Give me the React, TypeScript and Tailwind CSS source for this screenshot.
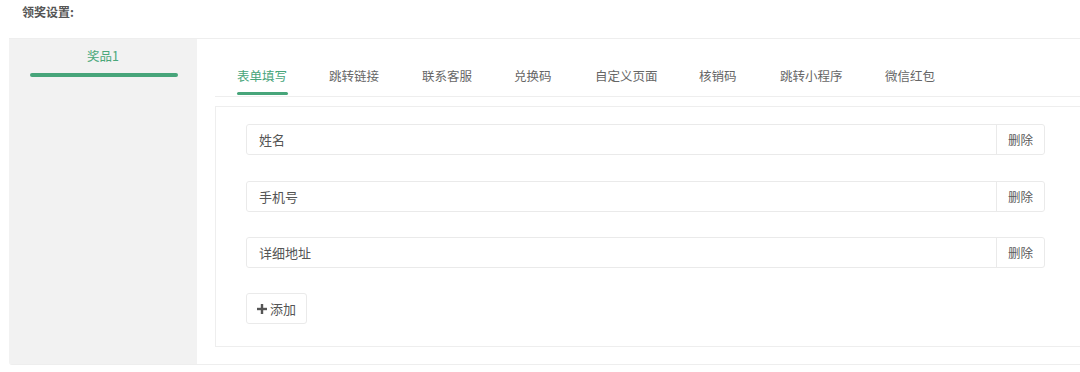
import React from "react";

const tabs = ["表单填写", "跳转链接", "联系客服", "兑换码", "自定义页面", "核销码", "跳转小程序", "微信红包"];
const tabX = [237, 329, 422, 514, 595, 699, 780, 885];
const fields = ["姓名", "手机号", "详细地址"];

export default function App() {
  return (
    <div
      className="w-[1080px] h-[372px] overflow-hidden bg-white text-[#666]"
      style={{ fontFamily: '"Noto Sans CJK SC", "Noto Sans", sans-serif' }}
    >
      <div className="pl-[22px] pt-[4px] h-[38px] text-[12px] font-bold leading-[16px] text-[#555]">领奖设置:</div>
      <div className="ml-[9px] w-[1120px] h-[327px] flex border-t border-b border-[#eeeeee] rounded-bl-[3px] overflow-hidden">
        <div className="w-[188px] shrink-0 bg-[#f2f2f2] flex flex-col items-center">
          <div className="mt-[8px] text-[12.5px] leading-[18px] text-[#4aa87a]">奖品1</div>
          <div className="mt-[8px] ml-[2px] w-[148px] h-[4px] rounded-full bg-[#47a57a]" />
        </div>
        <div className="flex-1 pl-[18px]">
          <div className="relative h-[58px] border-b border-[#eeeeee]">
            {tabs.map((t, i) => (
              <div
                key={t}
                className={`absolute top-[27px] text-[12.5px] leading-[20px] ${i === 0 ? "text-[#47a57a]" : "text-[#666]"}`}
                style={{ left: tabX[i] - 215 }}
              >
                {t}
                {i === 0 && <div className="absolute left-0 right-[-1px] top-[26px] h-[3px] rounded-full bg-[#47a57a]" />}
              </div>
            ))}
          </div>
          <div className="mt-[9px] h-[241px] border border-[#eeeeee] pl-[30px] pt-[17px]">
            {fields.map((f, i) => (
              <div
                key={f}
                className={`w-[799px] h-[31px] flex border border-[#eaeaea] rounded-[3px] ${i === 1 ? "mt-[26px]" : i === 2 ? "mt-[25px]" : ""}`}
              >
                <div className="flex-1 pl-[12px] text-[13px] leading-[29px] text-[#555]">{f}</div>
                <div className="w-[48px] border-l border-[#eaeaea] text-center text-[12.5px] leading-[29px] text-[#5a5a5a]">删除</div>
              </div>
            ))}
            <div className="mt-[25px] w-[61px] h-[31px] border border-[#eaeaea] rounded-[3px] flex items-center justify-center gap-[3px] text-[13px] text-[#555]">
              <svg width="10" height="10" viewBox="0 0 10 10">
                <rect x="3.8" y="0" width="2.4" height="10" fill="#555" />
                <rect x="0" y="3.8" width="10" height="2.4" fill="#555" />
              </svg>
              <span>添加</span>
            </div>
          </div>
        </div>
      </div>
    </div>
  );
}
